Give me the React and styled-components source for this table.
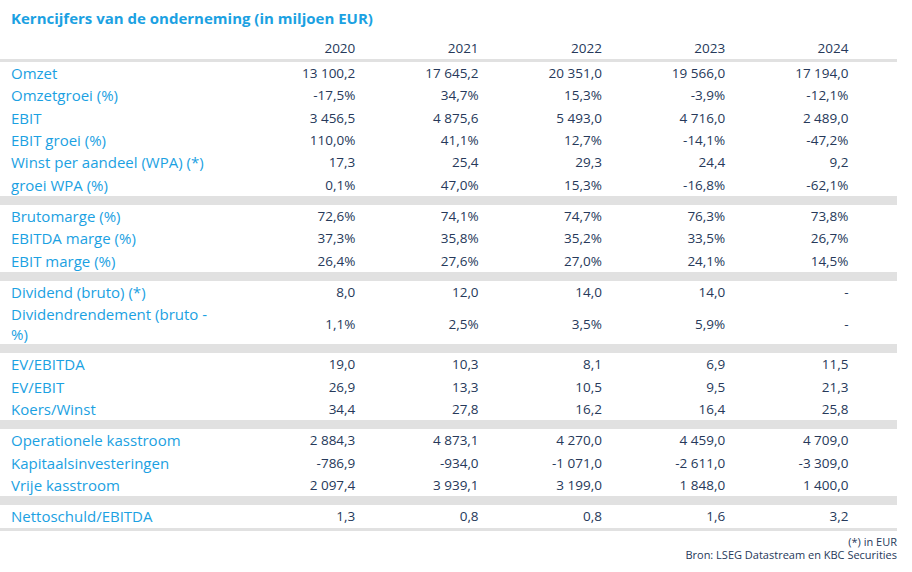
import React from 'react';
import styled, {createGlobalStyle} from 'styled-components';

const GlobalStyle = createGlobalStyle`
  html, body {
    margin: 0;
    padding: 0;
    background: #ffffff;
    font-family: "Open Sans", "Noto Sans", sans-serif;
  }
`;

const Page = styled.div`
  width: 897px;
  padding-top: 7px;
`;

const Title = styled.h1`
  margin: 0 0 0 11px;
  font-size: 15px;
  font-weight: 700;
  line-height: 22px;
  color: #1ba1e2;
`;

const Grid = styled.div`
  display: grid;
  grid-template-columns: 232px repeat(5, 123.3px) 1fr;
  align-items: center;
`;

const HeadRow = styled(Grid)`
  height: 22px;
  margin-top: 8px;
  border-bottom: 3px solid #e1e1e1;
`;

const Row = styled(Grid)`
  height: ${p => (p.$tall ? '41px' : '22.33px')};
`;

const Section = styled.div`
  border-bottom: ${p => (p.$last ? '3px' : '9px')} solid #e1e1e1;
`;

const Label = styled.div`
  padding-left: 11px;
  font-size: 15px;
  line-height: 20px;
  color: #1ba1e2;
  white-space: pre-line;
`;

const Cell = styled.div`
  text-align: right;
  font-size: 13.5px;
  line-height: 20px;
  color: #26395a;
`;

const Footer = styled.div`
  padding-top: 4px;
`;

const Note = styled.div`
  text-align: right;
  font-size: 11px;
  line-height: 13.5px;
  color: #26395a;
`;

const years = ['2020', '2021', '2022', '2023', '2024'];

const sections = [
  [
    ['Omzet', '13 100,2', '17 645,2', '20 351,0', '19 566,0', '17 194,0'],
    ['Omzetgroei (%)', '-17,5%', '34,7%', '15,3%', '-3,9%', '-12,1%'],
    ['EBIT', '3 456,5', '4 875,6', '5 493,0', '4 716,0', '2 489,0'],
    ['EBIT groei (%)', '110,0%', '41,1%', '12,7%', '-14,1%', '-47,2%'],
    ['Winst per aandeel (WPA) (*)', '17,3', '25,4', '29,3', '24,4', '9,2'],
    ['groei WPA (%)', '0,1%', '47,0%', '15,3%', '-16,8%', '-62,1%'],
  ],
  [
    ['Brutomarge (%)', '72,6%', '74,1%', '74,7%', '76,3%', '73,8%'],
    ['EBITDA marge (%)', '37,3%', '35,8%', '35,2%', '33,5%', '26,7%'],
    ['EBIT marge (%)', '26,4%', '27,6%', '27,0%', '24,1%', '14,5%'],
  ],
  [
    ['Dividend (bruto) (*)', '8,0', '12,0', '14,0', '14,0', '-'],
    ['Dividendrendement (bruto -\n%)', '1,1%', '2,5%', '3,5%', '5,9%', '-'],
  ],
  [
    ['EV/EBITDA', '19,0', '10,3', '8,1', '6,9', '11,5'],
    ['EV/EBIT', '26,9', '13,3', '10,5', '9,5', '21,3'],
    ['Koers/Winst', '34,4', '27,8', '16,2', '16,4', '25,8'],
  ],
  [
    ['Operationele kasstroom', '2 884,3', '4 873,1', '4 270,0', '4 459,0', '4 709,0'],
    ['Kapitaalsinvesteringen', '-786,9', '-934,0', '-1 071,0', '-2 611,0', '-3 309,0'],
    ['Vrije kasstroom', '2 097,4', '3 939,1', '3 199,0', '1 848,0', '1 400,0'],
  ],
  [
    ['Nettoschuld/EBITDA', '1,3', '0,8', '0,8', '1,6', '3,2'],
  ],
];

export default function App() {
  return (
    <Page>
      <GlobalStyle />
      <Title>Kerncijfers van de onderneming (in miljoen EUR)</Title>
      <HeadRow>
        <div />
        {years.map(y => <Cell key={y}>{y}</Cell>)}
      </HeadRow>
      {sections.map((rows, i) => (
        <Section key={i} $last={i === sections.length - 1}>
          {rows.map(([label, ...vals]) => (
            <Row key={label} $tall={label.includes('\n')}>
              <Label>{label}</Label>
              {vals.map((v, j) => <Cell key={j}>{v}</Cell>)}
            </Row>
          ))}
        </Section>
      ))}
      <Footer>
        <Note>(*) in EUR</Note>
        <Note>Bron: LSEG Datastream en KBC Securities</Note>
      </Footer>
    </Page>
  );
}
